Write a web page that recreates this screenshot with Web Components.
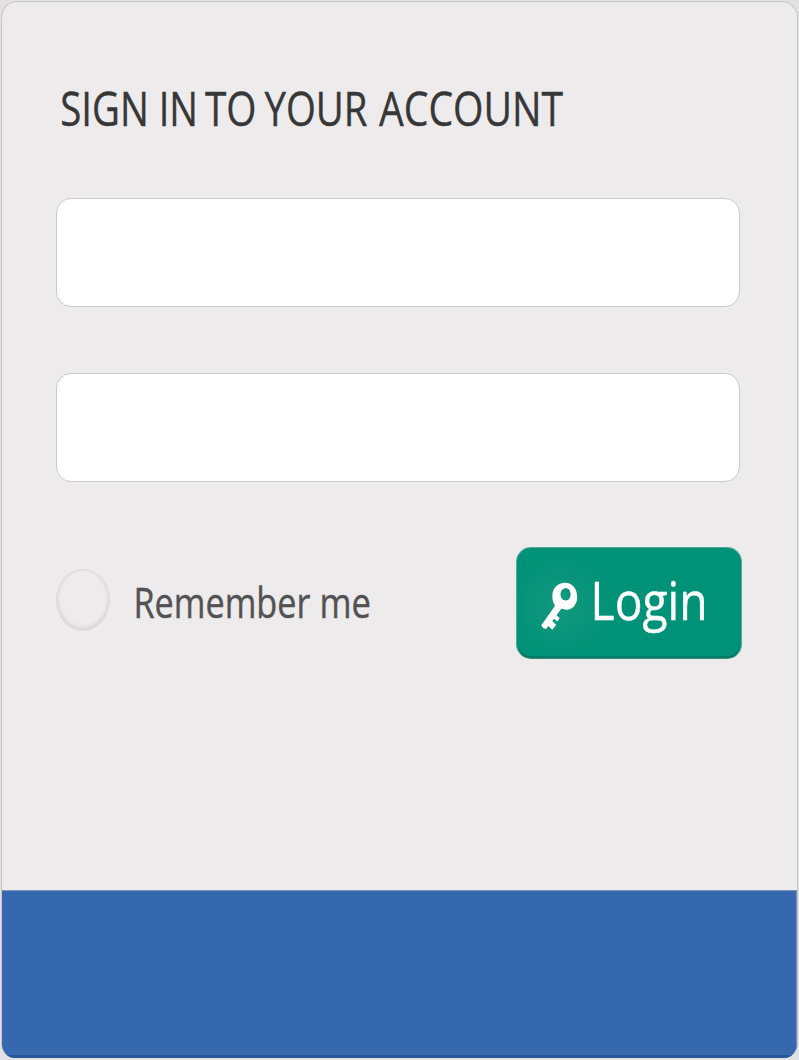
<!DOCTYPE html>
<html lang="en">
<head>
<meta charset="utf-8">
<title>Sign in</title>
<style>
html,body{margin:0;height:1060px;overflow:hidden;background:#e2e2e3;font-family:"Open Sans","Noto Sans",sans-serif}
</style>
</head>
<body>
<login-card>
  <fitted-text slot="title" words="SIGN:60.3:88.5 IN:158.7:39.3 TO:205:51.5 YOUR:264.5:103 ACCOUNT:379:184" size="48" baseline="46" height="60" color="#373737" weight="0.4"></fitted-text>
  <text-field></text-field>
  <text-field></text-field>
  <remember-option slot="actions"></remember-option>
  <login-button slot="actions"></login-button>
</login-card>
<script>
const define = (name, markup) => customElements.define(name, class extends HTMLElement {
  constructor() {
    super();
    this.attachShadow({mode: 'open'}).innerHTML = markup;
  }
});

// Condensed lettering: each word is given as text:x:width.
customElements.define('fitted-text', class extends HTMLElement {
  connectedCallback() {
    if (this.shadowRoot) return;
    const a = n => this.getAttribute(n);
    const words = a('words').split(' ').map(w => {
      const [t, x, l] = w.split(':');
      return `<text x="${x}" y="${a('baseline')}" textLength="${l}" lengthAdjust="spacingAndGlyphs">${t}</text>`;
    }).join(' ');
    this.attachShadow({mode: 'open'}).innerHTML = `
      <style>:host{display:block;height:${a('height')}px}svg{display:block;overflow:visible}</style>
      <svg width="100%" height="${a('height')}" font-size="${a('size')}" fill="${a('color')}" stroke="${a('color')}" stroke-width="${a('weight')}">${words}</svg>`;
  }
});

define('login-card', `
<style>
:host{display:flex;flex-direction:column;box-sizing:border-box;width:799px;height:1060px;padding:1px 1px 2px 1px}
.card{flex:1;display:flex;flex-direction:column;box-sizing:border-box;border:1px solid #c6c6c7;border-bottom:0;border-radius:16px 16px 14px 14px;background:#edebec;overflow:hidden}
.body{flex:1;display:flex;flex-direction:column;padding:78px 56px 0 54px}
.title{margin:0 -56px 58px -56px}
.fields{display:flex;flex-direction:column;gap:66px}
.actions{display:flex;justify-content:space-between;margin:65px -1px 0 0}
.foot{height:168px;box-sizing:border-box;background:#3568ae;border-top:1px solid #7895c1;border-bottom:3px solid #2a5797;margin:0 -1px;box-shadow:inset -2px 0 1px #6d92c8}
</style>
<div class="card">
  <div class="body">
    <div class="title"><slot name="title"></slot></div>
    <div class="fields"><slot></slot></div>
    <div class="actions"><slot name="actions"></slot></div>
  </div>
  <div class="foot"></div>
</div>`);

define('text-field', `
<style>:host{display:block;box-sizing:border-box;width:684px;height:109px;background:#fff;border:1px solid #cacacb;border-radius:15px}</style>`);

define('remember-option', `
<style>
:host{display:flex;padding-top:22px;gap:0;width:320px}
.dot{box-sizing:border-box;width:54px;height:62px;border-radius:50%;border:1px solid #dddcdd;background:#edebec;box-shadow:inset 0 -2px 4px #d3d1d2,inset 0 0 2px #dcdadb}
fitted-text{flex:1;padding-top:8px}
</style>
<div class="dot"></div>
<fitted-text words="Remember:23.5:177 me:209.5:51.5" size="42" baseline="41" height="54" color="#525252" weight="0.4"></fitted-text>`);

define('login-button', `
<style>
:host{display:flex;box-sizing:border-box;width:226px;height:112px;padding-left:23px;border:1px solid #53a995;border-bottom-color:#398b78;border-radius:15px;background:radial-gradient(circle at 44px 57px,#149980 0,#0b957b 24px,#009278 50px);box-shadow:inset 0 -2px #007c66}
svg{display:block;flex:none;width:38px;height:50px;margin-top:33px}
fitted-text{flex:1;padding-top:20px}
</style>
<svg viewBox="540 581 38 50"><path fill="#fff" fill-rule="evenodd" d="M565 582.7C572 582.7 577.2 588.6 577.2 597C577.2 604.6 572.5 609.7 566.5 609.7C564.5 609.7 562.8 609.2 561.5 608.5L556.5 615.2L559.7 618L557.3 621.5L554 618.8L552.3 621L556.2 624.8L552.3 629.7L548.3 625.9L545.8 629.3Q543.3 629 541.2 625.5L555 605.8Q552 601 552.4 595C552.8 587.8 558 582.7 565 582.7ZM565.8 588.2C562.8 588.2 560.5 590.8 560.5 594.3S562.8 600.5 565.8 600.5S570.6 597.8 570.6 594.3S568.8 588.2 565.8 588.2Z"/></svg>
<fitted-text words="Login:12.6:117" size="53" baseline="52" height="75" color="#fff" weight="0.4"></fitted-text>`);
</script>
</body>
</html>
